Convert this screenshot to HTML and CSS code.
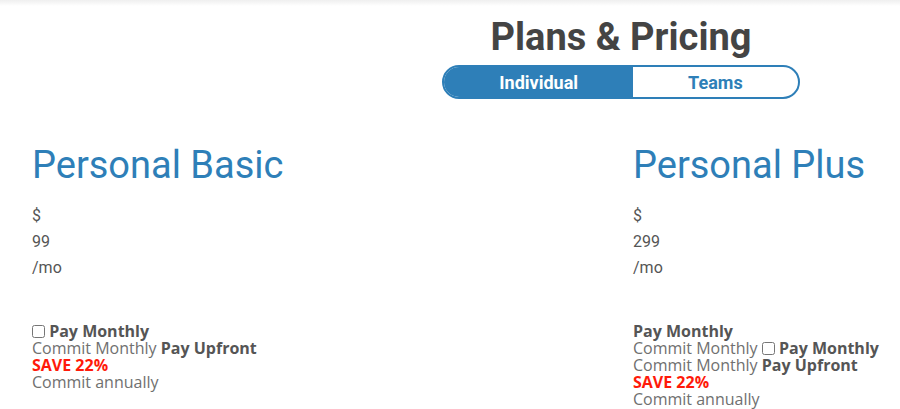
FILE: index.html
```html
<!DOCTYPE html>
<html>
<head>
<meta charset="utf-8">
<link rel="stylesheet" href="styles.css">
</head>
<body>
<div class="topshade"></div>
<header class="header">
  <h1 class="title">Plans &amp; Pricing</h1>
  <div class="toggle">
    <span class="seg seg-active">Individual</span>
    <span class="seg">Teams</span>
  </div>
</header>
<main class="plans">
  <section class="plan">
    <h2 class="plan-name">Personal Basic</h2>
    <div class="price">
      <div>$</div>
      <div>99</div>
      <div>/mo</div>
    </div>
    <div class="options">
      <div><input type="checkbox" class="cb"> <b>Pay Monthly</b></div>
      <div>Commit Monthly <b>Pay Upfront</b></div>
      <div class="save">SAVE 22%</div>
      <div>Commit annually</div>
    </div>
  </section>
  <section class="plan">
    <h2 class="plan-name">Personal Plus</h2>
    <div class="price">
      <div>$</div>
      <div>299</div>
      <div>/mo</div>
    </div>
    <div class="options">
      <div><b>Pay Monthly</b></div>
      <div>Commit Monthly <input type="checkbox" class="cb"> <b>Pay Monthly</b></div>
      <div>Commit Monthly <b>Pay Upfront</b></div>
      <div class="save">SAVE 22%</div>
      <div>Commit annually</div>
    </div>
  </section>
</main>
</body>
</html>
```
FILE: styles.css
```css
html, body {
  margin: 0;
  padding: 0;
  background: #fff;
}
body {
  font-family: Roboto, "Liberation Sans", sans-serif;
  color: #555;
  width: 900px;
  height: 409px;
  overflow: hidden;
  position: relative;
}
.topshade {
  position: absolute;
  left: 0;
  top: 0;
  right: 0;
  height: 6px;
  background: linear-gradient(#efefef, #fff);
}
.header {
  display: flex;
  flex-direction: column;
  align-items: center;
  padding-left: 342px;
}
.title {
  margin: 15px 0 0;
  font-size: 38px;
  line-height: 45px;
  font-weight: 700;
  color: #444;
}
.toggle {
  margin-top: 5px;
  display: flex;
  height: 34px;
  box-sizing: border-box;
  border: 2px solid #2e7fb8;
  border-radius: 17px;
  overflow: hidden;
}
.seg {
  display: flex;
  align-items: center;
  padding: 0 55px;
  font-size: 18px;
  font-weight: 700;
  color: #2e7fb8;
}
.seg-active {
  background: #2e7fb8;
  color: #fff;
}
.plans {
  display: grid;
  grid-template-columns: 601px 1fr;
  padding-left: 32px;
  margin-top: 44px;
}
.plan-name {
  margin: 0;
  font-size: 38px;
  line-height: 45px;
  font-weight: 400;
  color: #2e7fb8;
}
.price {
  margin-top: 15px;
  font-size: 16px;
  line-height: 26px;
  color: #555;
}
.options {
  margin-top: 42px;
  font-family: "Open Sans", "Liberation Sans", sans-serif;
  font-size: 16px;
  line-height: 17px;
  color: #707070;
}
.options b {
  color: #555;
}
.cb {
  margin: 0;
  width: 13px;
  height: 13px;
  vertical-align: -1px;
}
.save {
  color: #ff1a0a;
  font-weight: 700;
}
```
